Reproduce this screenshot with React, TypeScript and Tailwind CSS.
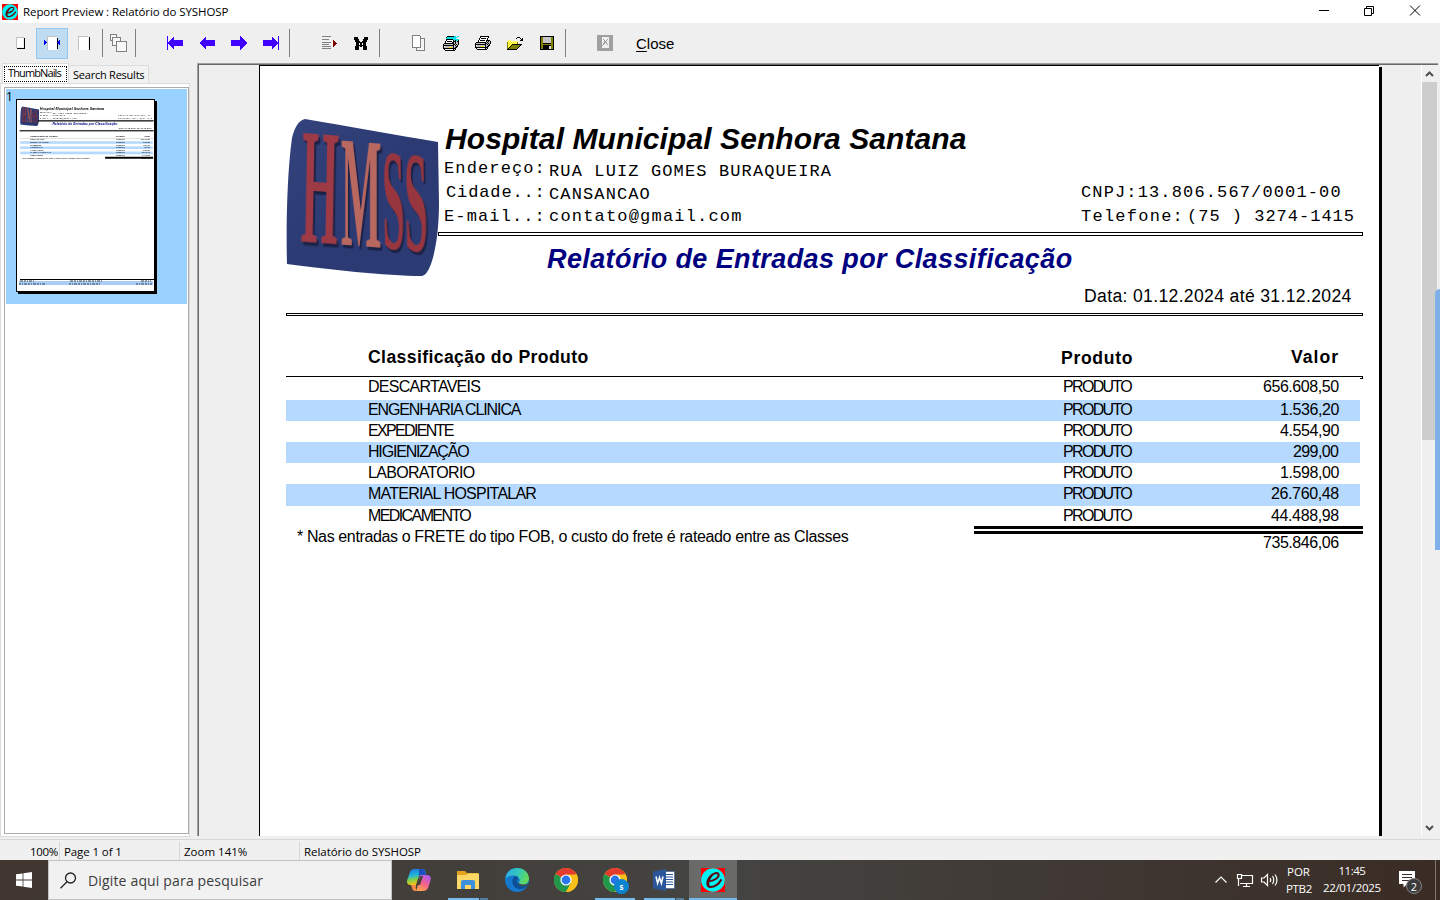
import { useLayoutEffect, useRef, useState, type ReactNode } from "react";

function Fit({ w, className = "", children }: { w: number; className?: string; children: string }) {
  const ref = useRef<HTMLSpanElement>(null);
  const [spacing, setSpacing] = useState<number | null>(null);
  useLayoutEffect(() => {
    if (ref.current && spacing === null) {
      setSpacing((w - ref.current.offsetWidth) / Math.max(1, children.length - 1));
    }
  }, [w, children, spacing]);
  return (
    <span
      ref={ref}
      className={"inline-block shrink-0 align-top whitespace-pre [font-variant-ligatures:none] " + className}
      style={spacing === null ? undefined : { letterSpacing: spacing, width: w }}
    >
      {children}
    </span>
  );
}

function Logo() {
  const letters = [
    { c: "H", m: "matrix(0.475 0.035 -0.03 1.65 14.500 123)", f: "#9d3a45" },
    { c: "M", m: "matrix(0.43 0.035 0 1.58 55 126.500)", f: "#b9685f" },
    { c: "S", m: "matrix(0.4 0.04 0.02 1.44 97 130)", f: "#98363f" },
    { c: "S", m: "matrix(0.42 0.04 0.02 1.44 119 132)", f: "#98363f" },
  ];
  return (
    <svg width="154" height="160" viewBox="0 0 154 160" className="overflow-visible">
      <defs>
        <linearGradient id="lg" x1="0" y1="0" x2="1" y2="1">
          <stop offset="0" stopColor="#34437c" />
          <stop offset="0.5" stopColor="#2c3a74" />
          <stop offset="1" stopColor="#2b3b73" />
        </linearGradient>
      </defs>
      <path
        d="M19 1 C60 8 110 17 152 24 L153 85 C153 110 150 132 145 146 Q141 157 136 158 C100 158 40 151 1 146 C0 110 1 55 6 20 Q10 3 19 1Z"
        fill="url(#lg)"
      />
      {letters.map((l, i) => (
        <text
          key={i}
          transform={l.m}
          className="font-['Liberation_Serif',serif] font-bold [filter:drop-shadow(4px_2px_0_#1b2145)]"
          fontSize="100"
          fill={l.f}
        >
          {l.c}
        </text>
      ))}
    </svg>
  );
}

const rows: [string, number, string, number][] = [
  ["DESCARTAVEIS", 113, "656.608,50", 76],
  ["ENGENHARIA CLINICA", 153, "1.536,20", 59],
  ["EXPEDIENTE", 86, "4.554,90", 59],
  ["HIGIENIZAÇÃO", 102, "299,00", 46],
  ["LABORATORIO", 107, "1.598,00", 59],
  ["MATERIAL HOSPITALAR", 169, "26.760,48", 68],
  ["MEDICAMENTO", 104, "44.488,98", 68],
];

const rowHeights = ["h-[23px]", "h-[21px]", "h-[21px]", "h-[21px]", "h-[21px]", "h-[22px]", "h-[20px]"];

function Report({ mini = false }: { mini?: boolean }) {
  const mono = "text-[17px] leading-[26px] font-['Liberation_Mono',monospace]";
  const rule = mini ? "bg-black outline-[4px] outline-black" : "border border-black";
  return (
    <div className="w-[1119px] font-['Liberation_Sans',sans-serif] text-black">
      <div className="flex h-[247px]">
        <div className="w-[178px] shrink-0 pt-[52px] pl-[26px]">
          <Logo />
        </div>
        <div className="flex flex-1 flex-col">
          <div className="flex h-[90px] pt-[56px] pl-[7px]">
            <Fit w={521} className="text-[30px] leading-[34px] font-bold italic">Hospital Municipal Senhora Santana</Fit>
          </div>
          <div className="flex h-6 pl-[6px]">
            <Fit w={101} className={mono}>Endereço:</Fit>
            <Fit w={282} className={mono + " mt-[3px] ml-[4px]"}>RUA LUIZ GOMES BURAQUEIRA</Fit>
          </div>
          <div className="flex h-6 pl-[8px]">
            <Fit w={99} className={mono}>Cidade..:</Fit>
            <Fit w={101} className={mono + " mt-[2px] ml-[4px]"}>CANSANCAO</Fit>
            <Fit w={260} className={mono + " ml-[431px]"}>CNPJ:13.806.567/0001-00</Fit>
          </div>
          <div className="flex h-[28px] pl-[6px]">
            <Fit w={101} className={mono}>E-mail..:</Fit>
            <Fit w={192} className={mono + " ml-[4px]"}>contato@gmail.com</Fit>
            <Fit w={102} className={mono + " ml-[340px]"}>Telefone:</Fit>
            <Fit w={167} className={mono + " ml-[4px]"}>(75 ) 3274-1415</Fit>
          </div>
          <div className={"h-[4px] w-[925px] shrink-0 " + rule} />
          <div className="mt-[7px] flex h-8 pl-[109px]">
            <Fit w={525} className="text-[27px] leading-8 font-bold text-[#000080] italic">
              Relatório de Entradas por Classificação
            </Fit>
          </div>
          <div className="mt-[11px] flex pl-[646px]">
            <Fit w={267} className="text-[17.6px] leading-5">Data: 01.12.2024 até 31.12.2024</Fit>
          </div>
        </div>
      </div>
      <div className={"ml-[26px] h-[3px] w-[1077px] " + rule} />
      <div className="flex h-[60px] pt-[31px] pl-[108px]">
        <Fit w={220} className="text-[17.6px] leading-5 font-bold">Classificação do Produto</Fit>
        <Fit w={71} className="mt-px ml-[473px] text-[17.6px] leading-5 font-bold">Produto</Fit>
        <Fit w={47} className="ml-[159px] text-[17.6px] leading-5 font-bold">Valor</Fit>
      </div>
      <div className="relative ml-[26px] h-px w-[1077px] bg-black">
        <div className="absolute top-0 right-0 h-[3px] w-[3px] border-r border-b border-black" />
      </div>
      <div className="ml-[26px] w-[1074px]">
        {rows.map(([name, nameW, value, valueW], i) => (
          <div
            key={name}
            className={
              "flex pr-[21px] pl-[82px] text-[16px] leading-[19px] " +
              rowHeights[i] +
              (i % 2 ? " bg-[#b5d9ff]" : "")
            }
          >
            <div className="w-[695px]">
              <Fit w={nameW}>{name}</Fit>
            </div>
            <Fit w={70}>PRODUTO</Fit>
            <div className="ml-auto">
              <Fit w={valueW}>{value}</Fit>
            </div>
          </div>
        ))}
      </div>
      <div className="flex pl-[37px] text-[16px] leading-[19px]">
        <Fit w={552} className="mt-px">
          * Nas entradas o FRETE do tipo FOB, o custo do frete é rateado entre as Classes
        </Fit>
        <div className="ml-[125px] flex w-[389px] flex-col">
          <div className={mini ? "mb-[-8px] h-[16px] bg-black" : "h-[8px] border-y-[3px] border-black"} />
          <div className="flex justify-end pr-[24px]">
            <Fit w={76} className="-mt-px">735.846,06</Fit>
          </div>
        </div>
      </div>
    </div>
  );
}

function AppGlyph({ size }: { size: number }) {
  return (
    <svg width={size} height={size} viewBox="0 0 24 24">
      <rect width="24" height="24" fill="#fe0000" />
      <circle cx="12" cy="12" r="11.8" fill="#00f4f4" />
      <path
        d="M7.6 13.2 C13 13.2 18 9.6 17.6 6.6 C17.2 4 12 4.6 8.6 9 C5 13.5 5.6 19 9.6 19 C13.6 19 17.5 16.4 20.6 11.4"
        fill="none"
        stroke="#5c0a10"
        strokeWidth="2"
      />
      <path d="M10 8 C6 12 5 17 8.5 18.8 C6.6 15.5 8.6 10.5 12 7Z" fill="#5c0a10" stroke="#5c0a10" />
    </svg>
  );
}

function Px({ w = 18, h = 18, children, className = "" }: { w?: number; h?: number; children: ReactNode; className?: string }) {
  return (
    <svg width={w} height={h} viewBox={`0 0 ${w} ${h}`} shapeRendering="crispEdges" className={"shrink-0 " + className}>
      {children}
    </svg>
  );
}

const palette: Record<string, string> = {
  K: "#000",
  W: "#fff",
  G: "#c0c0c0",
  Y: "#ffe800",
  C: "#00dfe8",
  O: "#808000",
  L: "#ffff80",
};

function Bitmap({ data, className }: { data: string[]; className?: string }) {
  return (
    <Px w={data[0].length} h={data.length} className={className}>
      {data.flatMap((line, y) =>
        line.split("").map((c, x) =>
          c === "." ? null : <rect key={x + "-" + y} x={x} y={y} width="1" height="1" fill={palette[c]} />,
        ),
      )}
    </Px>
  );
}

const printerBody = [
  ".KKKKKKKKKKGKGGK",
  "KGGGGGGGGGKKGKGK",
  "KKKKKKKKKKKGKGK.",
  "KWGGGGGGGGKGGKK.",
  "KGGGGGYYYGKGKK..",
  "KKKKKKKKKKKKK...",
  ".KWWWWWWWWKGK...",
  "..KKKKKKKKKK....",
];
const printer = [
  ".....KKKKKKKKK..",
  ".....KWWWWWWWK..",
  "....KWKKKKKWK...",
  "....KWWWWWWWK...",
  "...KWKKKKKWKKKK.",
  "...KWWWWWWWKGKGK",
  ...printerBody,
];
const printerSetup = [
  "....KKKKKKKCC.CC",
  "...KCCCCCCCCCC..",
  "...CCCCCCCCCC...",
  "...KKKKKKKCCCCCC",
  "...KWWWWWWKCKCCK",
  "..KWKKKKKWKKKGKK",
  "..KWWWWWWKKGKGGK",
  ...printerBody,
];
const folder = [
  "..........KKK...",
  ".........K...K.K",
  "..............KK",
  ".LLL.........KKK",
  "LYLYLLLLLLL.....",
  "OLYLYLYLYLO.....",
  "OYLYLYLYLYO.....",
  "OLYLYKKKKKKKKKK.",
  "OYLYKOOOOOOOOK..",
  "OLYKOOOOOOOOK...",
  "OYKOOOOOOOOK....",
  "OKOOOOOOOOK.....",
  "KKKKKKKKKK......",
];
const binoculars = [
  "KKKK......KKKK",
  "KKKK......KKKK",
  "KKKKK....KKKKK",
  ".KKKK....KKKK.",
  ".KKKKK..KKKKK.",
  "..KKKKKKKKKK..",
  "..KKKWKKWKKK..",
  "..KKKWKKWKKK..",
  "..KKKKKKKKKK..",
  ".KKKK.KK.KKKK.",
  ".KKKK....KKKK.",
  ".KKKK....KKKK.",
  ".KKKK....KKKK.",
];

function Arrow({ flip = false, bar = false }: { flip?: boolean; bar?: boolean }) {
  return (
    <Px w={18} h={16}>
      <g transform={flip ? "translate(18 0) scale(-1 1)" : undefined} fill="#4000ff">
        <path d={bar ? "M2 8 8 1V5H17V11H8V15Z" : "M1 8 8 1V5H17V11H8V15Z"} />
        {bar && <rect x="1" y="1" width="1" height="14" />}
      </g>
    </Px>
  );
}

function Divider() {
  return <div className="h-7 w-px shrink-0 bg-[#808080]" />;
}

function Toolbar() {
  return (
    <div className="flex h-10 shrink-0 items-center bg-[#efefef]">
      <Px w={10} h={14} className="ml-[16px]">
        <path d="M0 1H7V11H0Z" fill="#fff" />
        <path d="M.5 12V1.500H8" stroke="#c0c0c0" fill="none" />
        <path d="M8.500 2V13M1 12.500H9" stroke="#000" fill="none" />
      </Px>
      <div className="ml-[10px] flex h-[31px] w-8 items-center justify-center border border-[#90c8f6] bg-[#c0dcf3]">
        <Px w={18} h={16}>
          <path d="M4 2H14V15H4Z" fill="#fff" />
          <path d="M4.500 15V1.500H14" stroke="#c0c0c0" fill="none" />
          <path d="M14.500 3V14" stroke="#000" />
          <path d="M1 5V10L4 7.5ZM17 5V10L14 7.5Z" fill="#0000e8" />
        </Px>
      </div>
      <Px w={13} h={16} className="ml-[10px]">
        <path d="M0 1H10V15H0Z" fill="#fff" />
        <path d="M.5 15V1.5H10" stroke="#c0c0c0" fill="none" />
        <path d="M11.5 2V15" stroke="#000" />
      </Px>
      <div className="ml-[11px]"><Divider /></div>
      <Px w={18} h={20} className="ml-[7px]">
        <g fill="#f8f8f8" stroke="#808080">
          <path d="M.5 1.5H6.5V7.5H.5Z" />
          <path d="M2.500 4.500H10.500V12.500H2.500Z" />
          <path d="M6.500 8.500H16.500V18.500H6.500Z" />
        </g>
      </Px>
      <div className="ml-[7px]"><Divider /></div>
      <div className="ml-[30px] flex gap-[14px]">
        <Arrow bar />
        <Arrow />
        <Arrow flip />
        <Arrow flip bar />
      </div>
      <div className="ml-[9px]"><Divider /></div>
      <Px w={16} h={16} className="ml-[31px]">
        <path d="M1 1.500H10M1 4.500H8M1 7.500H10M1 9.500H8M1 11.500H10M1 13.500H10" stroke="#808080" />
        <path d="M12 5V12L16 8.500Z" fill="#800000" />
      </Px>
      <Bitmap data={binoculars} className="mx-px ml-[17px]" />
      <div className="ml-[10px]"><Divider /></div>
      <Px w={14} h={16} className="ml-[32px]">
        <path d="M4.500 3.500H12.500V15.500H4.500Z" fill="#f5f5f5" stroke="#808080" />
        <path d="M.5 .5H7.500L8.500 1.500V12.500H.5Z" fill="#fff" stroke="#808080" />
      </Px>
      <Bitmap data={printerSetup} className="ml-[17px]" />
      <Bitmap data={printer} className="ml-[16px]" />
      <Bitmap data={folder} className="ml-[16px]" />
      <Px w={14} h={14} className="ml-[17px]">
        <rect width="14" height="14" fill="#000" />
        <path d="M1 1H3V8H11V1H13V13H11V9H3V13H1Z" fill="#808000" />
        <rect x="3" y="1" width="8" height="6" fill="#c6c6c6" />
        <rect x="4" y="9" width="6" height="5" fill="#000" />
        <rect x="9" y="10" width="2" height="3" fill="#e0e0e0" />
      </Px>
      <div className="ml-[11px]"><Divider /></div>
      <Px w={16} h={16} className="ml-[31px]">
        <rect width="16" height="16" fill="#a0a0a0" />
        <path d="M5 2H12V13H5Z" fill="#f0f0f0" />
        <path d="M6 4 11 10M11 4 5 11" stroke="#a0a0a0" />
      </Px>
      <div className="mt-px ml-[23px] flex font-['Liberation_Sans',sans-serif] text-[15px] leading-5 text-black">
        <span className="underline underline-offset-2">C</span>
        <span>lose</span>
      </div>
    </div>
  );
}

function TitleBar() {
  return (
    <div className="flex h-[23px] shrink-0 items-center bg-white pl-[2px]">
      <AppGlyph size={16} />
      <Fit w={205} className="ml-[5px] font-['Open_Sans',sans-serif] text-[11.5px] leading-[22px] text-black">
        Report Preview : Relatório do SYSHOSP
      </Fit>
      <svg className="mr-[18px] ml-auto" width="104" height="14" viewBox="0 0 104 14" fill="none" stroke="#000">
        <path d="M1 5.500H11" />
        <path d="M46.500 3.500H53.500V10.500H46.500ZM48.500 3V1.500H55.500V8.500H54" />
        <path d="M92 .5 102 10.500M102 .5 92 10.500" />
      </svg>
    </div>
  );
}

function Thumbnails() {
  const ui = "font-['Open_Sans',sans-serif] text-[11px] text-black";
  return (
    <div className="flex w-[190px] shrink-0 flex-col">
      <div className="flex h-[20px] items-end pl-[2px]">
        <div className="flex h-[20px] w-[67px] border border-b-0 border-[#dcdcdc] bg-white p-px pt-[2px]">
          <div className="h-4 w-[63px] border border-dotted border-black pl-[3px]">
            <Fit w={54} className={ui + " leading-[12px]"}>ThumbNails</Fit>
          </div>
        </div>
        <div className="h-[18px] w-[80px] border border-b-0 border-l-0 border-[#dcdcdc] bg-[#f2f2f2] pl-[4px]">
          <Fit w={72} className={ui + " leading-[17px]"}>Search Results</Fit>
        </div>
      </div>
      <div className="h-[754px] border border-[#dcdcdc] bg-white p-[3px] pr-0">
        <div className="h-[747px] w-[185px] border border-[#ababb0] p-px">
          <div className="flex h-[215px] bg-[#99d1ff]">
            <span className="w-[10px] font-['Open_Sans',sans-serif] text-[12px] leading-[15px]">1</span>
            <div className="mt-[10px] h-[193px] w-[139px] overflow-hidden border border-black bg-white shadow-[2px_2px_0_#000]">
              <div className="h-[179px] w-[137px]">
                <div className="origin-top-left scale-[0.1234]">
                  <Report mini />
                </div>
              </div>
              <svg width="137" height="12" viewBox="0 0 137 12">
                <path d="M3 .5H137" stroke="#000" />
                <path d="M2 2H136V6H2Z" fill="#a9cdf5" />
                <path d="M3 2H17M53 2H85M124 2H134" stroke="#444" strokeDasharray="3 1 2 1 1 1" />
                <path d="M2 5H28M52 5H84M119 5H135" stroke="#345" strokeDasharray="2 1 1 1 3 1" />
              </svg>
            </div>
          </div>
        </div>
      </div>
    </div>
  );
}

function Viewer() {
  return (
    <div className="mr-[2px] ml-[7px] flex h-[773px] flex-1 border-t border-l border-[#a0a0a0]">
      <div className="flex flex-1 overflow-hidden border-t border-l border-[#696969] bg-[#efefef]">
        <div className="ml-[60px] h-[771px] w-[1120px] border-t border-l border-black bg-white">
          <Report />
        </div>
        <div className="mt-[2px] w-[3px] bg-black" />
        <div className="ml-[39px] flex w-[16px] flex-col border-l border-white bg-[#f0f0f0]">
          <svg width="15" height="17" viewBox="0 0 15 17" fill="none" stroke="#505050" strokeWidth="2">
            <path d="M4 11 7.500 7.500 11 11" />
          </svg>
          <div className="h-[358px] bg-[#cdcdcd]" />
          <svg className="mt-auto" width="15" height="15" viewBox="0 0 15 15" fill="none" stroke="#505050" strokeWidth="2">
            <path d="M4 5 7.500 8.500 11 5" />
          </svg>
        </div>
      </div>
    </div>
  );
}

function StatusBar() {
  const t = "text-[11.5px] leading-[19px]";
  return (
    <div className="flex h-[21px] shrink-0 border-t border-[#d7d7d7] bg-[#f0f0f0] pt-[2px] font-['Open_Sans',sans-serif] text-black">
      <div className="flex w-[60px] justify-end border-r border-[#d7d7d7] pr-px">
        <Fit w={28} className={t}>100%</Fit>
      </div>
      <div className="w-[120px] border-r border-[#d7d7d7] pl-[4px]">
        <Fit w={58} className={t}>Page 1 of 1</Fit>
      </div>
      <div className="w-[120px] border-r border-[#d7d7d7] pl-[4px]">
        <Fit w={63} className={t}>Zoom 141%</Fit>
      </div>
      <div className="pl-[4px]">
        <Fit w={117} className={t}>Relatório do SYSHOSP</Fit>
      </div>
    </div>
  );
}

function Chrome() {
  return (
    <svg width="24" height="24" viewBox="0 0 24 24">
      <circle cx="12" cy="12" r="12" fill="#fbc116" />
      <path d="M12 12 L1.600 6A12 12 0 0 1 22.400 6Z" fill="#e33b2e" />
      <path d="M1.600 6A12 12 0 0 0 12 24L17.200 15L12 12Z" fill="#22964b" />
      <path d="M12 12 12 6.500H22.600A12 12 0 0 1 12 24L17 14.500Z" fill="#fbc116" />
      <circle cx="12" cy="12" r="5.600" fill="#fff" />
      <circle cx="12" cy="12" r="4.400" fill="#2a75ea" />
    </svg>
  );
}

function TaskButton({ children, className = "", line }: { children: ReactNode; className?: string; line?: ReactNode }) {
  return (
    <div className={"flex h-10 shrink-0 flex-col items-center " + className}>
      <div className="flex h-[38px] items-center pt-[2px]">{children}</div>
      <div className="flex h-[2px]">{line}</div>
    </div>
  );
}

function Taskbar() {
  return (
    <div className="flex h-10 shrink-0 bg-linear-to-r from-[#40362f] via-[#444442] to-[#3a2c25] font-['Open_Sans',sans-serif] text-white">
      <div className="flex w-12 items-center justify-center">
        <svg width="16" height="16" viewBox="0 0 16 16" fill="#fff">
          <path d="M0 2.300 6.600 1.400V7.600H0ZM7.400 1.300 16 0V7.600H7.400ZM0 8.400H6.600V14.600L0 13.700ZM7.400 8.400H16V16L7.400 14.700Z" />
        </svg>
      </div>
      <div className="flex w-[344px] items-center border border-[#c2c2c2] bg-[#f1f1f1] pl-[11px]">
        <svg width="17" height="17" viewBox="0 0 17 17" fill="none" stroke="#222" strokeWidth="1.300">
          <circle cx="10.500" cy="6" r="5" />
          <path d="M7 9.700 .5 16.200" />
        </svg>
        <Fit w={175} className="mt-px ml-[11px] text-[14px] leading-5 text-[#3c3c3c]">Digite aqui para pesquisar</Fit>
      </div>
      <TaskButton className="ml-[3px] w-[48px]">
        <svg width="26" height="24" viewBox="0 0 26 24">
          <defs>
            <linearGradient id="ca" x1="0" y1="0" x2="0.200" y2="1">
              <stop offset="0" stopColor="#1b6fe0" />
              <stop offset="0.450" stopColor="#22b8d8" />
              <stop offset="0.700" stopColor="#7fd04a" />
              <stop offset="1" stopColor="#f6c41c" />
            </linearGradient>
            <linearGradient id="cb" x1="0.700" y1="0" x2="0.200" y2="1">
              <stop offset="0" stopColor="#b05cf0" />
              <stop offset="0.500" stopColor="#f4608c" />
              <stop offset="1" stopColor="#fba94a" />
            </linearGradient>
          </defs>
          <path d="M14 7H20Q26 7 24.500 12L22.500 19Q21 23 17 23H12Q10 23 11 20Z" fill="url(#cb)" />
          <path d="M8 1H16Q19 1 19.500 4L20 7H15Q13 7 12.200 10L10 17H5Q0 17 1.200 12L4 4Q5 1 8 1Z" fill="url(#ca)" />
          <path d="M10 17Q9 23 13 23H9Q6.500 23 6 20L5 17Z" fill="#f58a4a" />
          <path d="M13 1H16Q19 1 20 7H15Q13.500 7 12.800 9Z" fill="#1c4fc4" />
          <path d="M14.500 8H17L14 17H10.500Z" fill="#45403c" />
        </svg>
      </TaskButton>
      <TaskButton
        className="w-[48px]"
        line={<><div className="ml-[2px] w-[31px] bg-[#76b9ed]" /><div className="ml-px w-[8px] bg-[#557d9e]" /></>}
      >
        <svg width="22" height="20" viewBox="0 0 22 20" className="translate-x-px">
          <path d="M0 1H8L10 3H21V7H0Z" fill="#e3a21a" />
          <path d="M0 5H9L11 3.500H22V19H0Z" fill="#fbd765" />
          <path d="M4 12Q4 10 6 10H16Q18 10 18 12V19H14V15H8V19H4Z" fill="#3b8fdb" />
        </svg>
      </TaskButton>
      <TaskButton className="ml-[2px] w-[48px]">
        <svg width="24" height="24" viewBox="0 0 24 24">
          <defs>
            <linearGradient id="ea" x1="0" y1="0" x2="1" y2="0.300">
              <stop offset="0" stopColor="#2aa7e8" />
              <stop offset="0.600" stopColor="#35c9b8" />
              <stop offset="1" stopColor="#62d95c" />
            </linearGradient>
          </defs>
          <circle cx="12" cy="12" r="12" fill="#1478cc" />
          <path d="M.3 11C1 4 6 0 12 0 19 0 24 5 24 10.500 24 14.500 21 16.500 18 16.500 15.500 16.500 13.500 15.500 14.300 14 16 11 13 7.500 9 7.500 5 7.500 1 9 .3 11Z" fill="url(#ea)" />
          <path d="M9 9C6 12 7 20 14 21 18 21.500 21 20 22.500 17.500 18 19.500 13 18 12.200 14.500 11.500 12 13 11 13 10 12 8.500 10 8.300 9 9Z" fill="#0c4f96" />
          <path d="M13.500 14.500C13.500 16.500 19 18 23 15.500L22.500 17.500Q15 19.500 13 15.500Z" fill="#43423f" />
        </svg>
      </TaskButton>
      <TaskButton className="ml-[1px] w-[48px]"><Chrome /></TaskButton>
      <TaskButton className="ml-[1px] w-[48px]" line={<div className="w-[40px] bg-[#76b9ed]" />}>
        <div className="relative h-6 w-6">
          <Chrome />
          <div className="absolute top-[11px] left-[11px] flex h-[15px] w-[15px] items-center justify-center rounded-full bg-[#0c84cf] text-[8px] leading-none font-bold">
            s
          </div>
        </div>
      </TaskButton>
      <TaskButton
        className="w-[48px]"
        line={<><div className="ml-[1px] w-[31px] bg-[#76b9ed]" /><div className="ml-px w-[8px] bg-[#557d9e]" /></>}
      >
        <svg width="22" height="22" viewBox="0 0 22 22" className="translate-x-px">
          <path d="M11 2.500H21.500V19.500H11Z" fill="#fff" stroke="#2b579a" strokeWidth=".6" />
          <path d="M13 5.500H20M13 8H20M13 10.500H20M13 13H20M13 15.500H20" stroke="#2b579a" />
          <path d="M0 2.500 13 0V22L0 19.500Z" fill="#2b579a" />
          <path d="M3 7.500 4.600 14.500 6.500 8.500 8.400 14.500 10 7.500" fill="none" stroke="#fff" strokeWidth="1.500" />
        </svg>
      </TaskButton>
      <TaskButton className="ml-[2px] w-[48px] bg-[#6a6a69]" line={<div className="w-[48px] bg-[#76b9ed]" />}>
        <AppGlyph size={24} />
      </TaskButton>
      <div className="ml-auto flex items-center">
        <svg width="64" height="18" viewBox="0 0 64 18" fill="none" stroke="#fff" strokeWidth="1.200">
          <path d="M.5 11.500 6 6 11.500 11.500" />
          <path d="M27 4.500H37.500V12.500H25M23.500 8V15M22.500 3.500H26.500V7.500H22.500ZM31.500 13V15.500M28 15.500H35" />
          <path d="M46.500 7H49L52.500 3.500V14.500L49 11H46.500ZM55 7Q56.500 9 55 11M57.500 5Q60 9 57.500 13M60 3.500Q64 9 60 14.500" />
        </svg>
        <div className="ml-[7px] flex w-[26px] flex-col text-[11.5px]">
          <Fit w={23} className="ml-px self-start leading-[17px]">POR</Fit>
          <Fit w={26} className="self-start leading-[17px]">PTB2</Fit>
        </div>
        <div className="-mt-[2px] ml-[11px] flex w-[58px] flex-col items-center text-[11.5px]">
          <Fit w={27} className="leading-[17px]">11:45</Fit>
          <Fit w={58} className="leading-[18px]">22/01/2025</Fit>
        </div>
        <div className="relative mr-[12px] ml-[18px] h-6 w-6">
          <svg width="16" height="17" viewBox="0 0 16 17" className="mt-[3px]">
            <path d="M0 0H16V13H8L4.500 16.500V13H0Z" fill="#fff" />
            <path d="M3 3.500H13M3 6.500H13M3 9.500H10" stroke="#3b302a" />
          </svg>
          <div className="absolute top-[10px] left-[7px] flex h-4 w-4 items-center justify-center rounded-full border border-[#858585] bg-[#3b3b3b] text-[11px] leading-none">
            2
          </div>
        </div>
        <div className="mr-[4px] h-10 w-px bg-[#807a76]" />
      </div>
    </div>
  );
}

export default function App() {
  return (
    <div className="relative flex h-[900px] w-[1440px] flex-col overflow-hidden bg-[#efefef]">
      <TitleBar />
      <Toolbar />
      <div className="flex h-[776px] shrink-0">
        <Thumbnails />
        <Viewer />
      </div>
      <StatusBar />
      <Taskbar />
      <div className="absolute top-[289px] left-[1435px] h-[261px] w-[5px] rounded-tl-[5px] bg-[#7fb0ea]" />
    </div>
  );
}
